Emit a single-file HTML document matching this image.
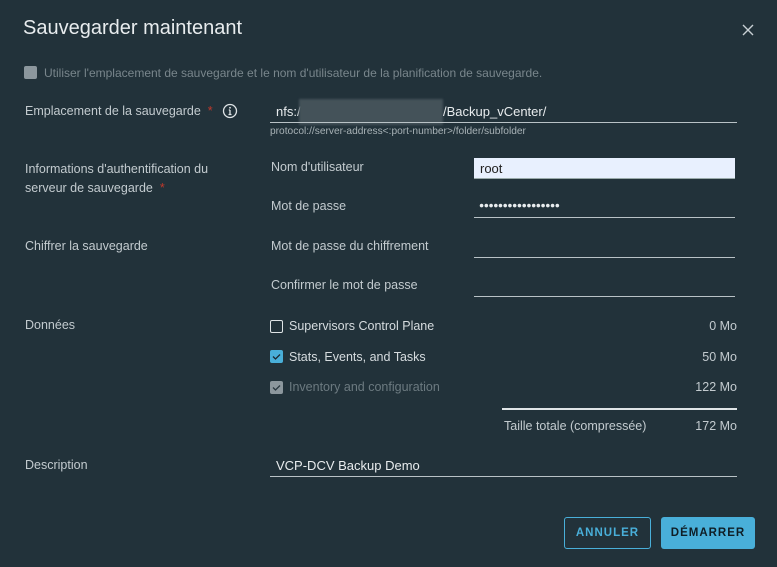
<!DOCTYPE html>
<html><head><meta charset="utf-8"><style>
*{margin:0;padding:0;box-sizing:border-box}
body{width:777px;height:567px;background:#22323a;font-family:"Liberation Sans",sans-serif;color:#c8d0d4;position:relative;overflow:hidden;font-size:12.5px}
.a{position:absolute;white-space:nowrap}
.l{color:#c3cbcf;font-size:12.5px;margin-top:1px}
.line{position:absolute;height:1px;background:#b9c2c6}
.req{color:#c0392b}
.cb{position:absolute;width:13px;height:13px;border-radius:2px}
</style></head><body>
<div class="a" style="left:23px;top:17px;font-size:20px;color:#e8ecee">Sauvegarder maintenant</div>
<svg class="a" style="left:741px;top:23px" width="14" height="14"><path d="M2 2L12 12M12 2L2 12" stroke="#c8d0d4" stroke-width="1.4"/></svg>
<div class="cb" style="left:24px;top:66px;background:#8c979d"></div>
<div class="a" style="left:44px;top:65px;color:#79868c;font-size:12px;margin-top:1px">Utiliser l'emplacement de sauvegarde et le nom d'utilisateur de la planification de sauvegarde.</div>
<div class="a l" style="left:25px;top:103px">Emplacement de la sauvegarde <span class="req">&nbsp;*</span></div>
<svg class="a" style="left:222px;top:103px" width="16" height="16"><circle cx="8" cy="8" r="6.5" fill="none" stroke="#dfe4e6" stroke-width="1.3"/><path d="M8 7v4.5M6.5 11.5h3M6.8 7h1.2" stroke="#dfe4e6" stroke-width="1.3"/><circle cx="8" cy="4.8" r="0.9" fill="#dfe4e6"/></svg>
<div class="a" style="left:276px;top:104px;color:#e8ecee;font-size:13px">nfs:/</div>
<div class="a" style="left:299px;top:99px;width:144px;height:26px;background:#445259;filter:blur(1px)"></div>
<div class="a" style="left:443px;top:104px;color:#e8ecee;font-size:13px">/Backup_vCenter/</div>
<div class="line" style="left:270px;top:122px;width:467px"></div>
<div class="a" style="left:270px;top:126px;font-size:10.2px;color:#a8b2b6">protocol://server-address&lt;:port-number&gt;/folder/subfolder</div>
<div class="a l" style="left:25px;top:159px;line-height:19px">Informations d'authentification du<br>serveur de sauvegarde <span class="req">&nbsp;*</span></div>
<div class="a l" style="left:271px;top:159px">Nom d'utilisateur</div>
<div class="a" style="left:474px;top:158px;width:261px;height:21px;background:#e8f0fe;border-bottom:1px solid #9aa;color:#222;padding:3px 6px;font-size:13px">root</div>
<div class="a l" style="left:271px;top:198px">Mot de passe</div>
<div class="a" style="left:479px;top:200px;color:#e8ecee;font-size:8.5px;letter-spacing:-0.4px">●●●●●●●●●●●●●●●●●</div>
<div class="line" style="left:474px;top:217px;width:261px"></div>
<div class="a l" style="left:25px;top:238px">Chiffrer la sauvegarde</div>
<div class="a l" style="left:271px;top:238px">Mot de passe du chiffrement</div>
<div class="line" style="left:474px;top:257px;width:261px"></div>
<div class="a l" style="left:271px;top:277px">Confirmer le mot de passe</div>
<div class="line" style="left:474px;top:296px;width:261px"></div>
<div class="a l" style="left:25px;top:317px">Données</div>
<div class="cb" style="left:270px;top:320px;border:1.3px solid #dfe4e6"></div>
<div class="a l" style="left:289px;top:318px;color:#d6dcdf">Supervisors Control Plane</div>
<div class="a l" style="right:40px;top:318px">0 Mo</div>
<div class="cb" style="left:270px;top:350px;background:#49afd9"><svg width="13" height="13"><path d="M3 6.5l2.5 2.5L10 4.5" stroke="#1b2a32" stroke-width="1.3" fill="none"/></svg></div>
<div class="a l" style="left:289px;top:349px;color:#d6dcdf">Stats, Events, and Tasks</div>
<div class="a l" style="right:40px;top:349px">50 Mo</div>
<div class="cb" style="left:270px;top:381px;background:#8c979d"><svg width="13" height="13"><path d="M3 6.5l2.5 2.5L10 4.5" stroke="#2a3840" stroke-width="1.3" fill="none"/></svg></div>
<div class="a l" style="left:289px;top:379px;color:#6c7a80">Inventory and configuration</div>
<div class="a l" style="right:40px;top:379px">122 Mo</div>
<div class="line" style="left:502px;top:408px;width:235px;height:2px;background:#dfe4e6"></div>
<div class="a l" style="left:504px;top:418px">Taille totale (compressée)</div>
<div class="a l" style="right:40px;top:418px">172 Mo</div>
<div class="a l" style="left:25px;top:457px">Description</div>
<div class="a" style="left:276px;top:458px;color:#e8ecee;font-size:13px">VCP-DCV Backup Demo</div>
<div class="line" style="left:270px;top:476px;width:467px"></div>
<div class="a" style="left:564px;top:517px;width:87px;height:32px;border:1px solid #49afd9;border-radius:3px;color:#49afd9;font-size:11.5px;font-weight:bold;letter-spacing:1px;text-align:center;line-height:30px">ANNULER</div>
<div class="a" style="left:661px;top:517px;width:94px;height:32px;background:#49afd9;border-radius:3px;color:#0f1e26;font-size:11.5px;font-weight:bold;letter-spacing:1px;text-align:center;line-height:32px">DÉMARRER</div>
</body></html>
